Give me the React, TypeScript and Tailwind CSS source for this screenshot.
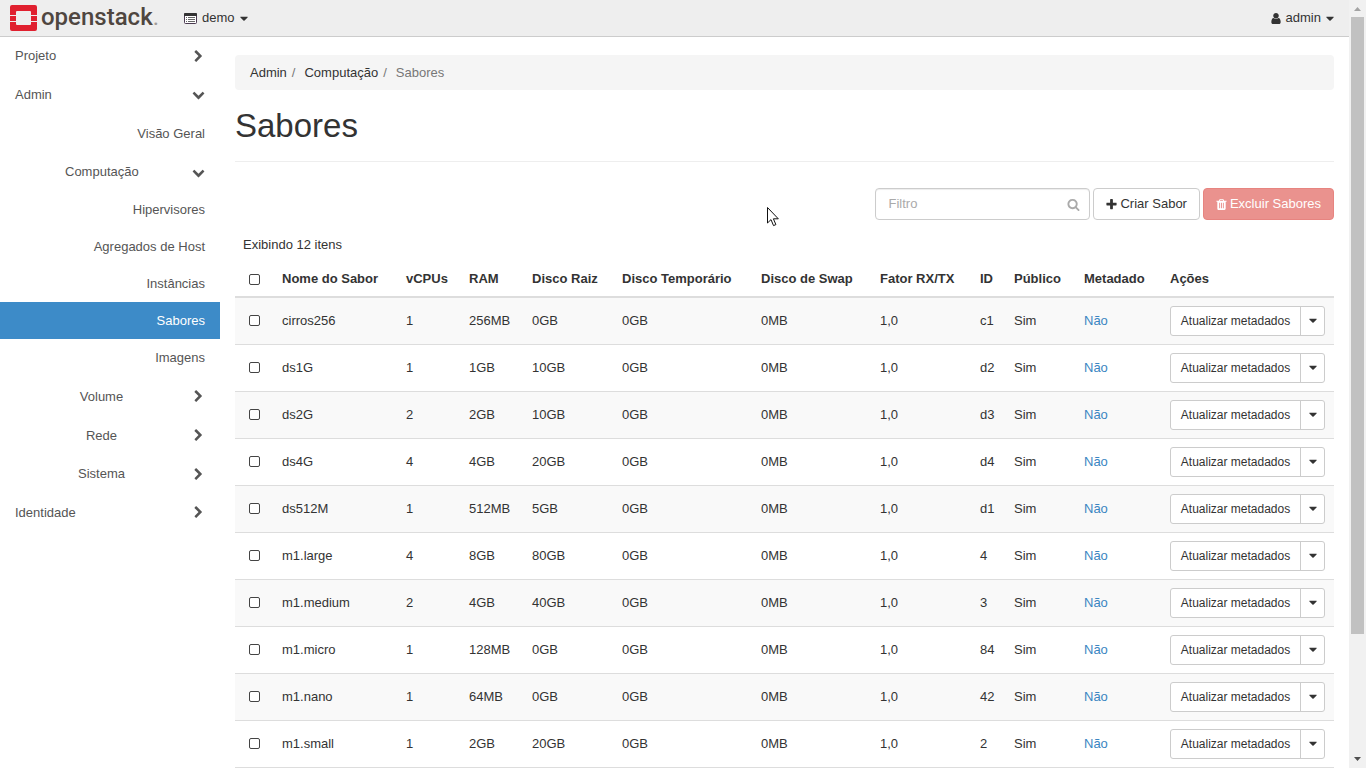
import React from 'react';

const paths = {
  right:
    'M1363 877l-742 742q-19 19-45 19t-45-19l-166-166q-19-19-19-45t19-45l531-531-531-531q-19-19-19-45t19-45l166-166q19-19 45-19t45 19l742 742q19 19 19 45t-19 45z',
  down: 'M1683 808l-742 741q-19 19-45 19t-45-19l-742-741q-19-19-19-45.5t19-45.5l166-165q19-19 45-19t45 19l531 531 531-531q19-19 45-19t45 19l166 165q19 19 19 45.5t-19 45.5z',
  caret: 'M1408 704q0 26-19 45l-448 448q-19 19-45 19t-45-19l-448-448q-19-19-19-45t19-45 45-19h896q26 0 45 19t19 45z',
  search:
    'M1216 832q0-185-131.5-316.5t-316.5-131.5-316.5 131.5-131.5 316.5 131.5 316.5 316.5 131.5 316.5-131.5 131.5-316.5zm512 832q0 52-38 90t-90 38q-54 0-90-38l-343-342q-179 124-399 124-143 0-273.5-55.5t-225-150-150-225-55.5-273.5 55.5-273.5 150-225 225-150 273.5-55.5 273.5 55.5 225 150 150 225 55.5 273.5q0 220-124 399l343 343q37 37 37 90z',
  plus: 'M1600 736v192q0 40-28 68t-68 28h-416v416q0 40-28 68t-68 28h-192q-40 0-68-28t-28-68v-416h-416q-40 0-68-28t-28-68v-192q0-40 28-68t68-28h416v-416q0-40 28-68t68-28h192q40 0 68 28t28 68v416h416q40 0 68 28t28 68z',
  user: 'M1536 1399q0 109-62.5 187t-150.5 78h-854q-88 0-150.5-78t-62.5-187q0-85 8.5-160.5t31.5-152 58.5-131 94-89 134.5-34.5q131 128 313 128t313-128q76 0 134.5 34.5t94 89 58.5 131 31.5 152 8.5 160.5zm-256-887q0 159-112.5 271.5t-271.5 112.5-271.5-112.5-112.5-271.5 112.5-271.5 271.5-112.5 271.5 112.5 112.5 271.5z',
  trash:
    'M704 1376v-704q0-14-9-23t-23-9h-64q-14 0-23 9t-9 23v704q0 14 9 23t23 9h64q14 0 23-9t9-23zm256 0v-704q0-14-9-23t-23-9h-64q-14 0-23 9t-9 23v704q0 14 9 23t23 9h64q14 0 23-9t9-23zm256 0v-704q0-14-9-23t-23-9h-64q-14 0-23 9t-9 23v704q0 14 9 23t23 9h64q14 0 23-9t9-23zm-544-992h448l-48-117q-7-9-17-11h-317q-10 2-17 11zm928 32v64q0 14-9 23t-23 9h-96v948q0 83-47 143.5t-113 60.5h-832q-66 0-113-58.5t-47-141.5v-952h-96q-14 0-23-9t-9-23v-64q0-14 9-23t23-9h309l70-167q15-37 54-63t79-26h320q40 0 79 26t54 63l70 167h309q14 0 23 9t9 23z',
};

const boxes: Partial<Record<keyof typeof paths, string>> = {
  caret: '344 0 1104 1792',
  user: '206 0 1380 1792',
  plus: '136 0 1520 1792',
  trash: '136 0 1520 1792',
};

function Icon({ name, className = 'size-[13px]' }: { name: keyof typeof paths; className?: string }) {
  return (
    <svg
      viewBox={boxes[name] ?? '0 0 1792 1792'}
      fill="currentColor"
      aria-hidden="true"
      className={`shrink-0 ${className}`}
    >
      <path d={paths[name]} />
    </svg>
  );
}

function Logo() {
  return (
    <a href="#" aria-label="openstack" className="flex items-center gap-1">
      <svg viewBox="0 0 27 26" className="h-[26px] w-[27px]" aria-hidden="true">
        <path
          fill="#e0202f"
          d="M2 0h23q2 0 2 2v8h-6V7q0-1-1-1H7q-1 0-1 1v3H0V2q0-2 2-2zM0 11h6v5H0zM21 11h6v5h-6zM0 17h6v2q0 1 1 1h13q1 0 1-1v-2h6v7q0 2-2 2H2q-2 0-2-2z"
        />
      </svg>
      <span className="pb-[3px] font-[Roboto,sans-serif] text-[24px] leading-[26px] font-medium text-[#4f4640]">
        openstack<span className="font-normal text-[#a09b97]">.</span>
      </span>
    </a>
  );
}

function ListIcon() {
  return (
    <svg viewBox="0 0 13 11" className="h-[11px] w-[13px]" aria-hidden="true">
      <rect x="0.5" y="0.5" width="12" height="10" rx="1" fill="#fff" stroke="#4a3a50" />
      <path d="M0 1q0-1 1-1h11q1 0 1 1v2H0z" fill="#333" />
      <path d="M2 4h1v1H2zM4 4h7v1H4zM2 6h1v1H2zM4 6h7v1H4zM2 8h1v1H2zM4 8h7v1H4z" fill="#666" />
    </svg>
  );
}

type NavProps = { label: string; open?: boolean; compact?: boolean; width?: string };

function NavGroup({ label, open, compact, width = '' }: NavProps) {
  return (
    <button
      type="button"
      aria-expanded={!!open}
      className={`flex w-full items-center justify-between px-[15px] ${compact ? 'h-[38px]' : 'h-[39px]'}`}
    >
      <span className={width}>{label}</span>
      <Icon name={open ? 'down' : 'right'} />
    </button>
  );
}

function NavItem({ label, active }: { label: string; active?: boolean }) {
  return (
    <a
      href="#"
      className={`flex h-[37px] items-center justify-end pr-[15px] ${active ? 'bg-[#3d8bc8] text-white' : ''}`}
    >
      {label}
    </a>
  );
}

const columns: [string, string][] = [
  ['Nome do Sabor', 'w-[124px]'],
  ['vCPUs', 'w-[63px]'],
  ['RAM', 'w-[63px]'],
  ['Disco Raiz', 'w-[90px]'],
  ['Disco Temporário', 'w-[139px]'],
  ['Disco de Swap', 'w-[119px]'],
  ['Fator RX/TX', 'w-[100px]'],
  ['ID', 'w-[34px]'],
  ['Público', 'w-[70px]'],
  ['Metadado', 'w-[86px]'],
  ['Ações', 'w-[172px]'],
];

const flavors = [
  ['cirros256', '1', '256MB', '0GB', 'c1'],
  ['ds1G', '1', '1GB', '10GB', 'd2'],
  ['ds2G', '2', '2GB', '10GB', 'd3'],
  ['ds4G', '4', '4GB', '20GB', 'd4'],
  ['ds512M', '1', '512MB', '5GB', 'd1'],
  ['m1.large', '4', '8GB', '80GB', '4'],
  ['m1.medium', '2', '4GB', '40GB', '3'],
  ['m1.micro', '1', '128MB', '0GB', '84'],
  ['m1.nano', '1', '64MB', '0GB', '42'],
  ['m1.small', '1', '2GB', '20GB', '2'],
];

function Check({ label }: { label: string }) {
  return (
    <input
      type="checkbox"
      aria-label={label}
      className="block size-[11px] appearance-none rounded-[2px] border border-[#444] bg-white"
    />
  );
}

export default function App() {
  return (
    <div className="relative flex h-screen overflow-hidden bg-white font-['Liberation_Sans',Arial,sans-serif] text-[13px] leading-[18px] text-[#333]">
      <div className="flex min-w-0 flex-1 flex-col">
        <header className="flex h-[37px] shrink-0 items-center justify-between border-b border-[#ccc] bg-[#eee] pr-[15px] pl-[10px]">
          <div className="flex items-center gap-[25px]">
            <Logo />
            <button type="button" className="flex items-center gap-[5px]">
              <ListIcon />
              demo
              <Icon name="caret" className="h-[13px] w-2" />
            </button>
          </div>
          <button type="button" className="flex items-center gap-[5px]">
            <Icon name="user" className="h-[13px] w-[10px]" />
            admin
            <Icon name="caret" className="h-[13px] w-2" />
          </button>
        </header>

        <div className="flex min-h-0 flex-1">
          <nav className="w-[220px] shrink-0 text-[#555]">
            <NavGroup label="Projeto" compact />
            <NavGroup label="Admin" open />
            <div className="flex h-[39px] items-center justify-end pr-[15px]">
              <a href="#">Visão Geral</a>
            </div>
            <NavGroup label="Computação" open compact width="w-[174px] pl-[50px] text-left" />
            <div className="pb-px">
              <NavItem label="Hipervisores" />
              <NavItem label="Agregados de Host" />
              <NavItem label="Instâncias" />
              <NavItem label="Sabores" active />
              <NavItem label="Imagens" />
            </div>
            <NavGroup label="Volume" width="w-[173px] text-center" />
            <NavGroup label="Rede" width="w-[173px] text-center" />
            <NavGroup label="Sistema" compact width="w-[173px] text-center" />
            <NavGroup label="Identidade" />
          </nav>

          <main className="min-w-0 flex-1 overflow-hidden px-[15px] pt-[18px]">
            <ol className="flex h-[35px] items-center rounded bg-[#f5f5f5] px-[15px]">
              <li>
                <a href="#">Admin</a>
                <span className="px-[5px] text-[#777]">/</span>
              </li>
              <li className="pl-1">
                <a href="#">Computação</a>
                <span className="px-[5px] text-[#777]">/</span>
              </li>
              <li className="pl-1 text-[#777]">Sabores</li>
            </ol>
            <h1 className="mt-[18px] border-b border-[#eee] pb-[17px] text-[33px] leading-[36px]">Sabores</h1>

            <div className="mt-[26px] flex justify-end gap-[3px]">
              <div className="flex h-8 w-[215px] items-center rounded border border-[#ccc] pr-[9px] pl-3 shadow-[inset_0_1px_1px_rgba(0,0,0,0.075)]">
                <input
                  type="text"
                  aria-label="Filtro"
                  placeholder="Filtro"
                  className="min-w-0 flex-1 bg-transparent outline-none placeholder:text-[#aaa]"
                />
                <Icon name="search" className="size-[13px] text-[#aaa]" />
              </div>
              <button type="button" className="flex h-8 items-center gap-[3px] rounded border border-[#ccc] px-3">
                <Icon name="plus" className="h-[13px] w-[11px]" />
                Criar Sabor
              </button>
              <button
                type="button"
                className="flex h-8 items-center gap-[3px] rounded border border-[#e78480] bg-[#ea928e] px-3 text-white"
              >
                <Icon name="trash" className="h-[13px] w-[11px]" />
                Excluir Sabores
              </button>
            </div>

            <table className="mt-4 w-full border-collapse text-left">
              <caption className="px-2 text-left">Exibindo 12 itens</caption>
              <thead>
                <tr className="h-[43px] border-b-2 border-[#ddd]">
                  <th className="w-[39px] pb-[11px] pl-[14px] align-bottom">
                    <Check label="Selecionar todos" />
                  </th>
                  {columns.map(([name, width]) => (
                    <th key={name} className={`px-2 pb-2 align-bottom font-bold whitespace-nowrap ${width}`}>
                      {name}
                    </th>
                  ))}
                </tr>
              </thead>
              <tbody>
                {flavors.map(([name, cpus, ram, disk, id]) => (
                  <tr key={name} className="h-[47px] border-b border-[#ddd] odd:bg-[#f9f9f9]">
                    <td className="pl-[14px]">
                      <Check label={name} />
                    </td>
                    {[name, cpus, ram, disk, '0GB', '0MB', '1,0', id, 'Sim'].map((v, i) => (
                      <td key={i} className="px-2">
                        {v}
                      </td>
                    ))}
                    <td className="px-2">
                      <a href="#" className="text-[#3b86c2]">
                        Não
                      </a>
                    </td>
                    <td className="px-2">
                      <div className="flex h-[30px] w-[155px] rounded-[3px] border border-[#ccc] bg-white">
                        <button type="button" className="flex-1 border-r border-[#ccc] text-xs whitespace-nowrap">
                          Atualizar metadados
                        </button>
                        <button
                          type="button"
                          aria-label="Mais ações"
                          className="flex w-[23px] items-center justify-center"
                        >
                          <Icon name="caret" className="h-[13px] w-2" />
                        </button>
                      </div>
                    </td>
                  </tr>
                ))}
              </tbody>
            </table>
          </main>
        </div>
      </div>

      <div aria-hidden="true" className="flex w-[17px] shrink-0 flex-col items-center bg-[#f1f1f1]">
        <svg viewBox="0 0 17 17" className="size-[17px] shrink-0">
          <path d="M5 11h7L8.500 7z" fill="#a3a3a3" />
        </svg>
        <div className="w-[13px] flex-[617] bg-[#c1c1c1]" />
        <div className="flex-[117]" />
        <svg viewBox="0 0 17 17" className="size-[17px] shrink-0">
          <path d="M5 6h7L8.500 10z" fill="#505050" />
        </svg>
      </div>

      <svg viewBox="0 0 12 20" className="pointer-events-none absolute top-[207px] left-[767px] h-5 w-3" aria-hidden="true">
        <path d="M.5.500v15.500l3.500-3.400 2.500 6 2.400-1-2.500-5.800h4.900z" fill="#fff" stroke="#111" />
      </svg>
    </div>
  );
}
